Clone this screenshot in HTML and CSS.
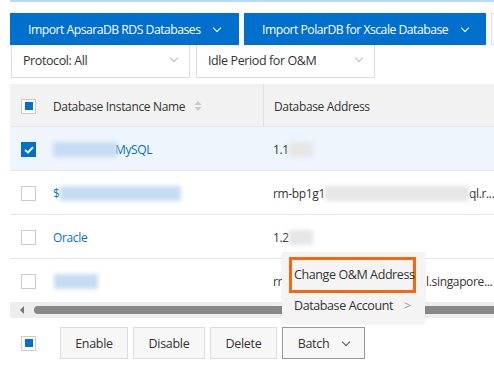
FILE: index.html
```html
<!DOCTYPE html>
<html lang="en">
<head>
  <meta charset="UTF-8"/>
  <title>Database Instances</title>
  <link rel="stylesheet" href="styles.css">
</head>
<body>
  <div class="page">
    <div class="topline"></div>

    <!-- Import buttons -->
    <div class="toolbar">
      <button class="btn-primary wide">Import ApsaraDB RDS Databases <span class="chev"></span></button>
      <button class="btn-primary wider">Import PolarDB for Xscale Database <span class="chev"></span></button>
      <button class="btn-ghost"></button>
    </div>

    <!-- Filters -->
    <div class="filters">
      <div class="select">Protocol: All <span class="chev dark"></span></div>
      <div class="select">Idle Period for O&amp;M <span class="chev dark"></span></div>
    </div>

    <!-- Table -->
    <div class="table">
      <div class="row head">
        <div class="cell check"><span class="cbox partial"></span></div>
        <div class="cell name">Database Instance Name
          <svg class="sort" width="8" height="12" viewBox="0 0 8 12"><path d="M4 1L7.5 5H0.5Z M4 11L7.5 7H0.5Z" fill="#c8c8c8"/></svg>
        </div>
        <div class="cell addr">Database Address</div>
      </div>
      <div class="row selected">
        <div class="cell check"><span class="cbox checked">
          <svg width="10" height="8" viewBox="0 0 10 8"><path d="M1 4L4 6.5L9 1.2" stroke="#fff" stroke-width="2" fill="none"/></svg>
        </span></div>
        <div class="cell name"><span class="blur blue w64"></span><span class="link">MySQL</span></div>
        <div class="cell addr">1.1<span class="blur gray w24"></span></div>
      </div>
      <div class="row">
        <div class="cell check"><span class="cbox"></span></div>
        <div class="cell name"><span class="link">$</span><span class="blur blue w121"></span></div>
        <div class="cell addr">rm-bp1g1<span class="blur gray w144"></span>ql.r...</div>
      </div>
      <div class="row">
        <div class="cell check"><span class="cbox"></span></div>
        <div class="cell name"><span class="link">Oracle</span></div>
        <div class="cell addr">1.2<span class="blur gray w24"></span></div>
      </div>
      <div class="row">
        <div class="cell check"><span class="cbox"></span></div>
        <div class="cell name"><span class="blur blue w44"></span></div>
        <div class="cell addr">rr<span class="spacer"></span>l.singapore...</div>
      </div>
      <div class="hscroll">
        <span class="arrow"></span>
        <span class="thumb"></span>
      </div>
    </div>

    <!-- Bottom actions -->
    <div class="actions">
      <span class="cbox partial"></span>
      <button class="btn">Enable</button>
      <button class="btn">Disable</button>
      <button class="btn">Delete</button>
      <button class="btn active">Batch <span class="chev dark"></span></button>
    </div>

    <!-- Batch menu -->
    <div class="menu">
      <div class="menu-item highlight">Change O&amp;M Address</div>
      <div class="menu-item">Database Account <span class="gt">&gt;</span></div>
    </div>
  </div>
</body>
</html>
```

FILE: styles.css
```css
* {
  box-sizing: border-box;
}

body {
  margin: 0;
  background-color: #fff;
  font-family: 'Open Sans', sans-serif;
  color: #333;
  overflow: hidden;
}

.page {
  position: relative;
  width: 494px;
  height: 375px;
  padding-left: 10px;
  overflow: hidden;
}

.topline {
  height: 2px;
  background-color: #b5ddf8;
}

.toolbar {
  display: flex;
  gap: 5px;
  margin-top: 11px;
  height: 32px;
  white-space: nowrap;
}

button {
  font-family: inherit;
  cursor: pointer;
}

.btn-primary {
  flex-shrink: 0;
  height: 32px;
  border: none;
  background-color: #0070cc;
  color: #fff;
  font-size: 12.2px;
  letter-spacing: -0.5px;
  text-align: left;
  padding: 0 0 0 18px;
}

.wide {
  width: 229px;
}

.wider {
  width: 242px;
}

.btn-ghost {
  flex-shrink: 0;
  width: 60px;
  height: 32px;
  border: 1px solid #ddd;
  background-color: #fff;
}

.chev {
  display: inline-block;
  width: 6px;
  height: 6px;
  border-right: 1px solid #fff;
  border-bottom: 1px solid #fff;
  transform: rotate(45deg);
  margin: 0 0 3px 11px;
}

.chev.dark {
  border-color: #555;
}

.filters {
  display: flex;
  gap: 6px;
  padding-left: 1px;
}

.select {
  position: relative;
  width: 179px;
  height: 33px;
  border: 1px solid #ddd;
  border-top: none;
  font-size: 12.5px;
  letter-spacing: -0.4px;
  line-height: 32px;
  padding-left: 11px;
  background-color: #fff;
}

.select .chev {
  position: absolute;
  right: 12px;
  top: 10px;
  border-color: #bbb;
  margin: 0;
}

.table {
  margin-top: 6px;
  width: 700px;
  font-size: 12px;
  letter-spacing: -0.35px;
}

.row {
  display: flex;
  height: 44px;
  padding-top: 2px;
  border-bottom: 1px solid #e6e6e6;
  align-items: stretch;
}

.row.head {
  height: 43px;
  padding-top: 2px;
  background-color: #f2f2f2;
  border-bottom: 1px solid #e6e6e6;
}

.row.selected {
  background-color: #eef5fd;
}

.cell {
  display: flex;
  align-items: center;
  white-space: nowrap;
}

.cell.check {
  width: 32px;
  padding-left: 11px;
}

.cell.name {
  width: 221px;
  padding-left: 11px;
}

.cell.addr {
  flex: 1;
  padding-left: 10px;
}

.head .cell.addr {
  border-left: 1px solid #e2e2e2;
  margin-top: -2px;
  padding-top: 2px;
}

.sort {
  margin-left: 9px;
}

.cbox {
  display: inline-flex;
  align-items: center;
  justify-content: center;
  width: 15px;
  height: 15px;
  border: 1px solid #ccc;
  background-color: #fff;
}

.cbox.partial::after {
  content: "";
  width: 8px;
  height: 8px;
  background-color: #0070cc;
}

.cbox.checked {
  background-color: #0070cc;
  border-color: #0070cc;
}

.link {
  color: #0070cc;
}

.blur {
  display: inline-block;
  height: 15px;
  filter: blur(2px);
}

.blur.blue {
  background-color: #c6dcf3;
}

.blur.gray {
  background-color: #e6e6e6;
}

.w24 { width: 24px; }
.w44 { width: 44px; margin-left: 1px; }
.w64 { width: 64px; margin-right: -2px; }
.w121 { width: 121px; }
.w144 { width: 144px; }

.spacer {
  display: inline-block;
  width: 144px;
}

.hscroll {
  position: relative;
  height: 16px;
  margin-top: -1px;
  background-color: #eeeeee;
  display: flex;
  align-items: center;
}

.arrow {
  width: 0;
  height: 0;
  margin-left: 10px;
  border-top: 4px solid transparent;
  border-bottom: 4px solid transparent;
  border-right: 4px solid #777;
}

.thumb {
  height: 8px;
  width: 660px;
  margin-left: 10px;
  border-radius: 4px;
  background-color: #888;
}

.actions {
  display: flex;
  align-items: center;
  gap: 5px;
  padding: 9px 0 0 11px;
}

.actions .cbox {
  margin-right: 19px;
}

.btn {
  height: 32px;
  padding: 0;
  border: 1px solid #ddd;
  background-color: #f7f7f7;
  color: #333;
  font-size: 12.5px;
  letter-spacing: -0.3px;
  width: 68px;
}

.btn:nth-of-type(2) {
  width: 72px;
}

.btn:nth-of-type(3) {
  width: 67px;
}

.btn.active {
  width: 83px;
  border-color: #999;
}

.btn .chev {
  margin-left: 11px;
}

.menu {
  position: absolute;
  left: 282px;
  top: 252px;
  width: 143px;
  height: 71px;
  background-color: #f4f4f4;
  box-shadow: 0 1px 3px rgba(0, 0, 0, 0.08);
  padding: 5px 0 0 7px;
  font-size: 12.5px;
  letter-spacing: -0.4px;
}

.menu-item {
  height: 26px;
  line-height: 26px;
  padding-left: 5px;
  white-space: nowrap;
}

.menu-item.highlight {
  width: 127px;
  height: 36px;
  line-height: 30px;
  border: 3px solid #f26a0c;
  padding-left: 2px;
}

.gt {
  color: #999;
  margin-left: 8px;
}
```
